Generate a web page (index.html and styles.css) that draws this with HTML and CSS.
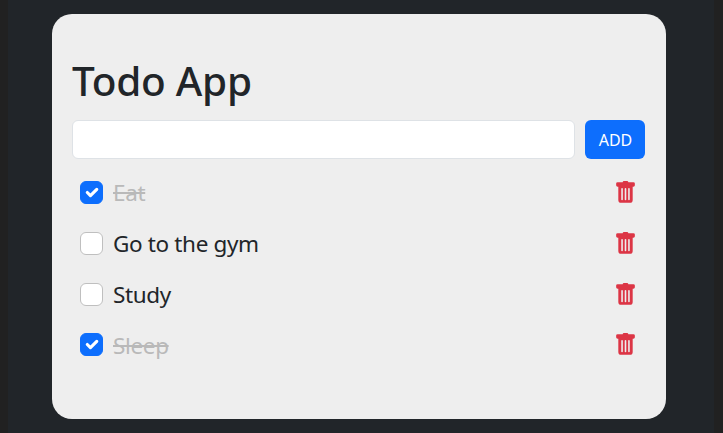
FILE: index.html
```html
<!DOCTYPE html>
<html lang="en">
<head>
<meta charset="utf-8">
<title>Todo App</title>
<link rel="stylesheet" href="styles.css">
</head>
<body>
<svg class="defs" aria-hidden="true">
  <symbol id="trash" viewBox="0 0 16 16"><path d="M2.5.8a1 1 0 0 0-1 1v1.200a1 1 0 0 0 1 1H3v9.200a2 2 0 0 0 2 2h6a2 2 0 0 0 2-2V4h.5a1 1 0 0 0 1-1V1.800a1 1 0 0 0-1-1H10a1 1 0 0 0-1-.8H7a1 1 0 0 0-1 .8z"/><path fill="none" stroke="#eee" stroke-linecap="round" stroke-width="1.1" d="M5.6 5.400v7.500M8 5.400v7.500M10.400 5.400v7.500"/></symbol>
  <symbol id="tick" viewBox="0 0 20 20"><path fill="none" stroke="#fff" stroke-linecap="round" stroke-linejoin="round" stroke-width="3" d="m6 10 3 3 6-6"/></symbol>
</svg>
<main class="page">
  <section class="card">
    <h1 class="title">Todo App</h1>
    <form class="entry">
      <input class="field" type="text" aria-label="Task">
      <button class="add" type="button">ADD</button>
    </form>
    <ul class="list">
      <li class="item done"><span class="box"><svg><use href="#tick"/></svg></span><span class="label">Eat</span><svg class="trash"><use href="#trash"/></svg></li>
      <li class="item"><span class="box"></span><span class="label">Go to the gym</span><svg class="trash"><use href="#trash"/></svg></li>
      <li class="item"><span class="box"></span><span class="label">Study</span><svg class="trash"><use href="#trash"/></svg></li>
      <li class="item done"><span class="box"><svg><use href="#tick"/></svg></span><span class="label">Sleep</span><svg class="trash"><use href="#trash"/></svg></li>
    </ul>
  </section>
</main>
</body>
</html>
```
FILE: styles.css
```css
* { box-sizing: border-box; }
body {
  margin: 0;
  height: 433px;
  padding: 0 9px 0 8px;
  overflow: hidden;
  background: #212121;
  color: #212529;
  font-family: "Noto Sans", "Open Sans", sans-serif;
}
.defs { display: none; }
.page {
  height: 433px;
  padding: 13.5px 48.5px 0 43.5px;
  background: #212529;
}
.card {
  height: 405.5px;
  padding: 42px 20.5px 0;
  border-radius: 20px;
  background: #eee;
}
.title {
  margin: 0;
  height: 50px;
  line-height: 50px;
  font-size: 40.5px;
  font-weight: 500;
  letter-spacing: -0.25px;
}
.entry {
  display: flex;
  gap: 10px;
  margin-top: 14.5px;
}
.field {
  flex: 1;
  min-width: 0;
  height: 38.5px;
  border: 1px solid #dee2e6;
  border-radius: 6px;
  background: #fff;
}
.add {
  width: 60px;
  height: 38.5px;
  padding: 2px 0 0 1px;
  border: 0;
  border-radius: 6px;
  background: #0d6efd;
  color: #fff;
  font: 16px "Noto Sans", "Open Sans", sans-serif;
}
.list {
  margin: 8.6px 0 0;
  padding: 0 8px;
  list-style: none;
}
.item {
  display: flex;
  align-items: center;
  height: 50.8px;
}
.box {
  width: 23px;
  height: 23px;
  border: 1px solid #bfbfbf;
  border-radius: 6px;
  background: #fff;
}
.box svg {
  display: block;
  width: 21px;
  height: 21px;
}
.done .box {
  border-color: #0d6efd;
  background: #0d6efd;
}
.label {
  flex: 1;
  margin-left: 10px;
  padding-top: 2px;
  font-size: 22.5px;
  letter-spacing: -0.35px;
  line-height: 30px;
}
.done .label {
  color: #b9b9b9;
  text-decoration: line-through;
  text-decoration-thickness: 1.5px;
}
.trash {
  width: 23px;
  height: 23px;
  fill: #dc3545;
}
```
